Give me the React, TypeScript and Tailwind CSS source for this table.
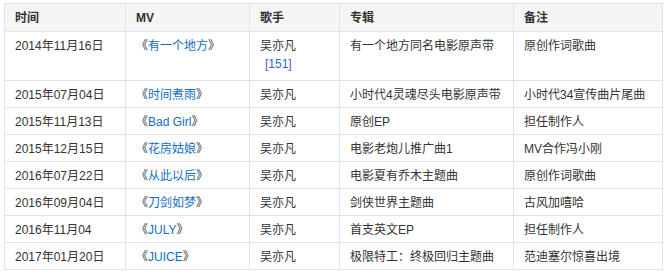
import React from 'react';

interface Row {
  date: string;
  title: string;
  singer: string;
  ref?: string;
  album: string;
  note: string;
}

const rows: Row[] = [
  { date: '2014年11月16日', title: '有一个地方', singer: '吴亦凡', ref: '[151]', album: '有一个地方同名电影原声带', note: '原创作词歌曲' },
  { date: '2015年07月04日', title: '时间煮雨', singer: '吴亦凡', album: '小时代4灵魂尽头电影原声带', note: '小时代34宣传曲片尾曲' },
  { date: '2015年11月13日', title: 'Bad Girl', singer: '吴亦凡', album: '原创EP', note: '担任制作人' },
  { date: '2015年12月15日', title: '花房姑娘', singer: '吴亦凡', album: '电影老炮儿推广曲1', note: 'MV合作冯小刚' },
  { date: '2016年07月22日', title: '从此以后', singer: '吴亦凡', album: '电影夏有乔木主题曲', note: '原创作词歌曲' },
  { date: '2016年09月04日', title: '刀剑如梦', singer: '吴亦凡', album: '剑侠世界主题曲', note: '古风加嘻哈' },
  { date: '2016年11月04', title: 'JULY', singer: '吴亦凡', album: '首支英文EP', note: '担任制作人' },
  { date: '2017年01月20日', title: 'JUICE', singer: '吴亦凡', album: '极限特工：终极回归主题曲', note: '范迪塞尔惊喜出境' },
];

const cell = 'border border-[#e3e3e3] pl-[10px] pr-1 align-top pt-[5px] leading-[18px]';

export default function App() {
  return (
    <div className="bg-white pl-[4px] pt-[3px] w-[666px] h-[273px] font-['Liberation_Sans','Noto_Sans_CJK_SC',sans-serif] text-[12px] text-[#333]">
      <table className="table-fixed border-collapse w-[658px]">
        <colgroup>
          <col className="w-[121px]" />
          <col className="w-[124px]" />
          <col className="w-[90px]" />
          <col className="w-[174px]" />
          <col className="w-[149px]" />
        </colgroup>
        <thead>
          <tr className="h-[28px] bg-[#f5f5f5]">
            {['时间', 'MV', '歌手', '专辑', '备注'].map((h) => (
              <th key={h} className="border border-[#e3e3e3] pl-[10px] text-left font-bold text-[#333] align-middle">
                {h}
              </th>
            ))}
          </tr>
        </thead>
        <tbody>
          {rows.map((r, i) => (
            <tr key={r.date} className={i === 0 ? 'h-[49px]' : 'h-[27px]'}>
              <td className={cell}>{r.date}</td>
              <td className={cell}>
                《<span className="text-[#136ec2]">{r.title}</span>》
              </td>
              <td className={cell}>
                {r.singer}
                {r.ref && (
                  <div className="pl-[5px] text-[#3366cc]">{r.ref}</div>
                )}
              </td>
              <td className={cell}>{r.album}</td>
              <td className={cell}>{r.note}</td>
            </tr>
          ))}
        </tbody>
      </table>
    </div>
  );
}
